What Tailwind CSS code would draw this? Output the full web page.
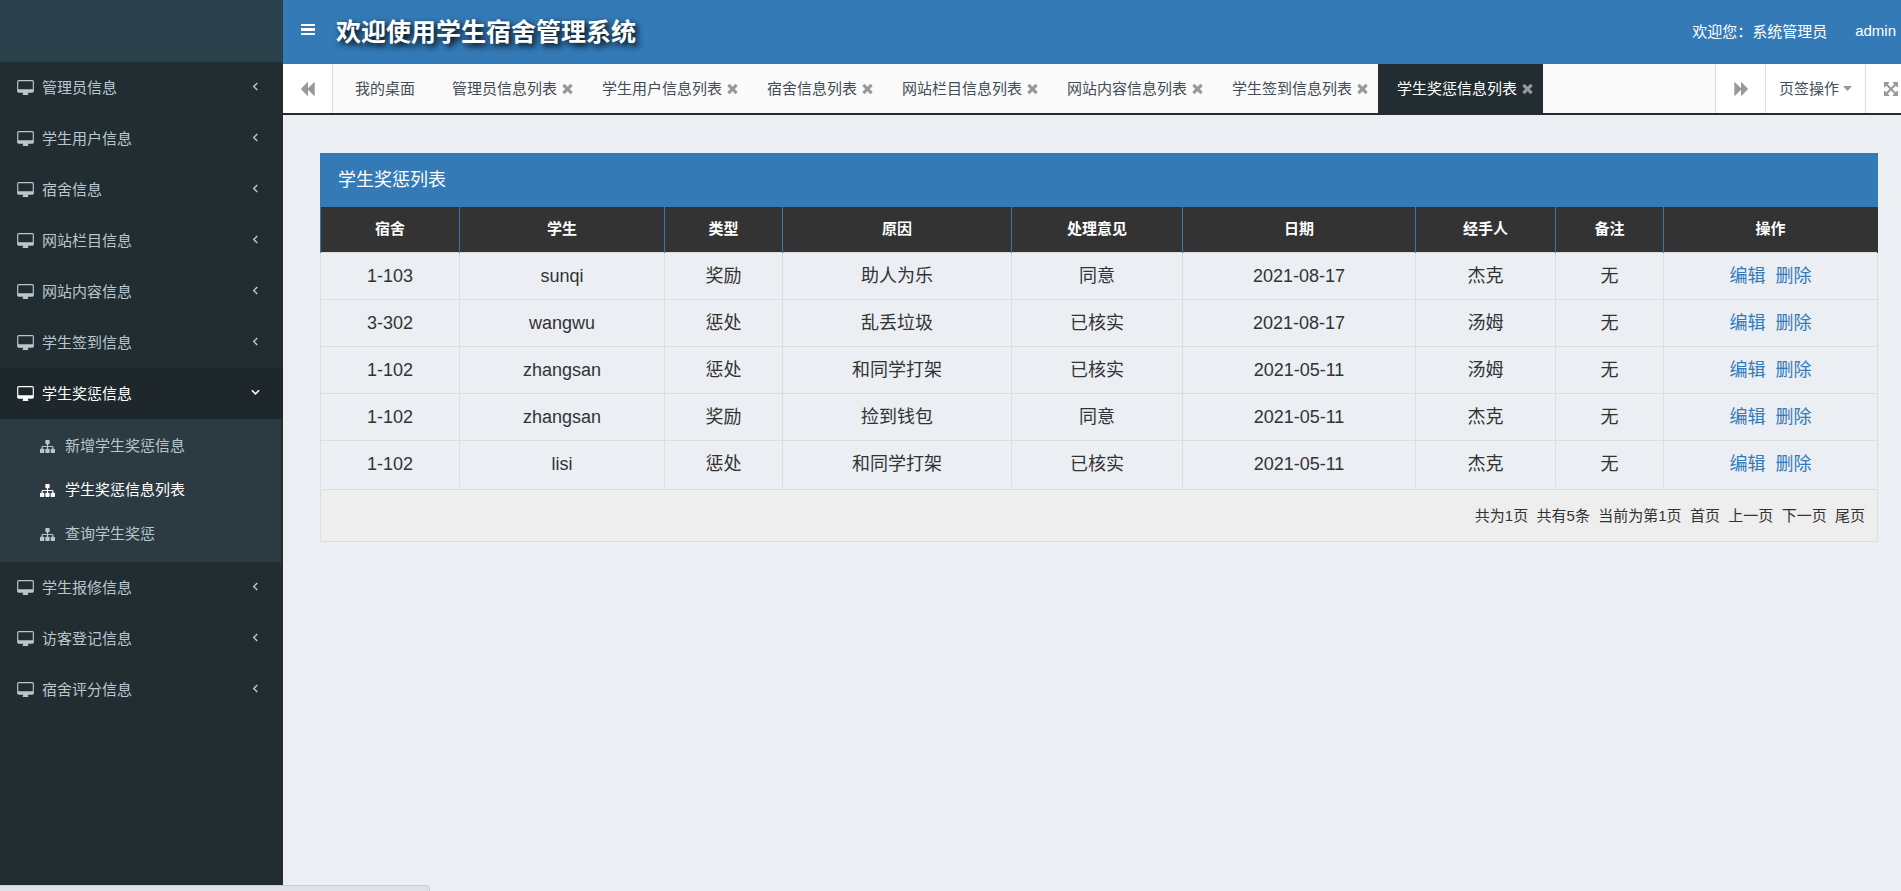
<!DOCTYPE html>
<html lang="zh-CN">
<head>
    <meta charset="UTF-8" />
    <meta name="viewport" content="width=device-width, initial-scale=1.0"/>
    <title>学生宿舍管理系统</title>
    <script src="https://cdn.jsdelivr.net/npm/@tailwindcss/browser@4"></script>
</head>
<body class="h-screen flex overflow-hidden bg-[#ebeef3] font-['Liberation_Sans','Noto_Sans_CJK_SC',sans-serif] text-[15px] leading-5 text-[#333]">

<!-- 图标 -->
<svg class="hidden">
    <symbol id="desktop" viewBox="0 0 1856 1664"><path d="M1728 992v-832q0-13-9.5-22.5t-22.5-9.5h-1536q-13 0-22.5 9.5t-9.5 22.5v832q0 13 9.5 22.5t22.5 9.5h1536q13 0 22.5-9.5t9.5-22.5zm128-832v1088q0 66-47 113t-113 47h-512q0 37 16 77.5t32 71 16 43.5q0 26-19 45t-45 19h-512q-26 0-45-19t-19-45q0-14 16-44t32-70 16-78h-512q-66 0-113-47t-47-113v-1088q0-66 47-113t113-47h1536q66 0 113 47t47 113z"/></symbol>
    <symbol id="sitemap" viewBox="0 128 1792 1536"><path d="M1792 1248v320q0 40-28 68t-68 28h-320q-40 0-68-28t-28-68v-320q0-40 28-68t68-28h96v-192h-512v192h96q40 0 68 28t28 68v320q0 40-28 68t-68 28h-320q-40 0-68-28t-28-68v-320q0-40 28-68t68-28h96v-192h-512v192h96q40 0 68 28t28 68v320q0 40-28 68t-68 28h-320q-40 0-68-28t-28-68v-320q0-40 28-68t68-28h96v-192q0-52 38-90t90-38h512v-192h-96q-40 0-68-28t-28-68v-320q0-40 28-68t68-28h320q40 0 68 28t28 68v320q0 40-28 68t-68 28h-96v192h512q52 0 90 38t38 90v192h96q40 0 68 28t28 68z"/></symbol>
    <symbol id="times" viewBox="302 366 1188 1188"><path d="M1490 1322q0 40-28 68l-136 136q-28 28-68 28t-68-28l-294-294-294 294q-28 28-68 28t-68-28l-136-136q-28-28-28-68t28-68l294-294-294-294q-28-28-28-68t28-68l136-136q28-28 68-28t68 28l294 294 294-294q28-28 68-28t68 28l136 136q28 28 28 68t-28 68l-294 294 294 294q28 28 28 68z"/></symbol>
    <symbol id="left" viewBox="0 0 6 10"><path d="M5 1L1 5l4 4" fill="none" stroke="currentColor" stroke-width="1.6"/></symbol>
    <symbol id="down" viewBox="0 0 10 6"><path d="M1 1l4 4 4-4" fill="none" stroke="currentColor" stroke-width="1.8"/></symbol>
    <symbol id="backward" viewBox="0 0 14 14"><path d="M7 .5v5.700L13 .3q.7-.5.7.4v12.600q0 .9-.7.400L7 7.800v5.700q0 .700-.600.200L.3 7.400q-.4-.400 0-.800L6.400.3Q7-.2 7 .5z"/></symbol>
    <symbol id="arrows" viewBox="128 128 1536 1536"><path d="M1411 541l-355 355 355 355 144-144q29-31 70-14 39 17 39 59v448q0 26-19 45t-45 19h-448q-42 0-59-40-17-39 14-69l144-144-355-355-355 355 144 144q31 30 14 69-17 40-59 40h-448q-26 0-45-19t-19-45v-448q0-42 40-59 39-17 69 14l144 144 355-355-355-355-144 144q-19 19-45 19-12 0-24-5-40-17-40-59v-448q0-26 19-45t45-19h448q42 0 59 40 17 39-14 69l-144 144 355 355 355-355-144-144q-31-30-14-69 17-40 59-40h448q26 0 45 19t19 45v448q0 42-39 59-13 5-25 5-26 0-45-19z"/></symbol>
</svg>

<!-- 左侧菜单 -->
<aside class="w-[283px] shrink-0 bg-[#222d32] text-[#b8c7ce]">
    <div class="h-[62px] bg-[#2a404b]"></div>
    <nav>
        <a href="#" class="flex items-center h-[51px] pl-[17px] pr-6 hover:text-white"><svg class="w-[17px] h-[15px] mr-2 fill-current"><use href="#desktop"/></svg><span class="flex-1">管理员信息</span><svg class="w-[7px] h-[9px] mb-[3px]"><use href="#left"/></svg></a>
        <a href="#" class="flex items-center h-[51px] pl-[17px] pr-6 hover:text-white"><svg class="w-[17px] h-[15px] mr-2 fill-current"><use href="#desktop"/></svg><span class="flex-1">学生用户信息</span><svg class="w-[7px] h-[9px] mb-[3px]"><use href="#left"/></svg></a>
        <a href="#" class="flex items-center h-[51px] pl-[17px] pr-6 hover:text-white"><svg class="w-[17px] h-[15px] mr-2 fill-current"><use href="#desktop"/></svg><span class="flex-1">宿舍信息</span><svg class="w-[7px] h-[9px] mb-[3px]"><use href="#left"/></svg></a>
        <a href="#" class="flex items-center h-[51px] pl-[17px] pr-6 hover:text-white"><svg class="w-[17px] h-[15px] mr-2 fill-current"><use href="#desktop"/></svg><span class="flex-1">网站栏目信息</span><svg class="w-[7px] h-[9px] mb-[3px]"><use href="#left"/></svg></a>
        <a href="#" class="flex items-center h-[51px] pl-[17px] pr-6 hover:text-white"><svg class="w-[17px] h-[15px] mr-2 fill-current"><use href="#desktop"/></svg><span class="flex-1">网站内容信息</span><svg class="w-[7px] h-[9px] mb-[3px]"><use href="#left"/></svg></a>
        <a href="#" class="flex items-center h-[51px] pl-[17px] pr-6 hover:text-white"><svg class="w-[17px] h-[15px] mr-2 fill-current"><use href="#desktop"/></svg><span class="flex-1">学生签到信息</span><svg class="w-[7px] h-[9px] mb-[3px]"><use href="#left"/></svg></a>
        <a href="#" class="flex items-center h-[51px] pl-[17px] pr-[23px] bg-[#1e282c] text-white"><svg class="w-[17px] h-[15px] mr-2 fill-current"><use href="#desktop"/></svg><span class="flex-1">学生奖惩信息</span><svg class="w-[9px] h-[6px] mb-[3px]"><use href="#down"/></svg></a>
        <div class="mr-0.5 pt-[5px] pb-1.5 bg-[#2c3b41]">
            <a href="#" class="flex items-center h-11 pl-10 hover:text-white"><svg class="w-[15px] h-[13px] mr-[10px] fill-current"><use href="#sitemap"/></svg>新增学生奖惩信息</a>
            <a href="#" class="flex items-center h-11 pl-10 text-white"><svg class="w-[15px] h-[13px] mr-[10px] fill-current"><use href="#sitemap"/></svg>学生奖惩信息列表</a>
            <a href="#" class="flex items-center h-11 pl-10 hover:text-white"><svg class="w-[15px] h-[13px] mr-[10px] fill-current"><use href="#sitemap"/></svg>查询学生奖惩</a>
        </div>
        <a href="#" class="flex items-center h-[51px] pl-[17px] pr-6 hover:text-white"><svg class="w-[17px] h-[15px] mr-2 fill-current"><use href="#desktop"/></svg><span class="flex-1">学生报修信息</span><svg class="w-[7px] h-[9px] mb-[3px]"><use href="#left"/></svg></a>
        <a href="#" class="flex items-center h-[51px] pl-[17px] pr-6 hover:text-white"><svg class="w-[17px] h-[15px] mr-2 fill-current"><use href="#desktop"/></svg><span class="flex-1">访客登记信息</span><svg class="w-[7px] h-[9px] mb-[3px]"><use href="#left"/></svg></a>
        <a href="#" class="flex items-center h-[51px] pl-[17px] pr-6 hover:text-white"><svg class="w-[17px] h-[15px] mr-2 fill-current"><use href="#desktop"/></svg><span class="flex-1">宿舍评分信息</span><svg class="w-[7px] h-[9px] mb-[3px]"><use href="#left"/></svg></a>
    </nav>
</aside>

<div class="flex-1 min-w-0">
    <!-- 顶部 -->
    <header class="flex items-center h-16 pl-[18px] pr-[5px] bg-[#337ab7] text-white">
        <button type="button" aria-label="菜单" class="mr-[21px] pb-[5px]"><svg class="w-[14px] h-[11px] fill-current" viewBox="0 0 14 11"><path d="M0 0h14v2H0zM0 4h14v3H0zM0 9h14v2H0z"/></svg></button>
        <h1 class="flex-1 text-[25px] leading-8 font-bold [text-shadow:3px_3px_6px_#000]">欢迎使用学生宿舍管理系统</h1>
        <a href="#" class="mr-7">欢迎您：系统管理员</a>
        <a href="#" class="pb-0.5">admin</a>
    </header>

    <!-- 页签 -->
    <div class="flex h-[51px] bg-[#fafafa] border-b-2 border-[#222d32] text-[#444c55] whitespace-nowrap">
        <button type="button" aria-label="向左" class="w-[50px] flex items-center justify-center bg-white border-r border-[#ddd] text-[#999]"><svg class="w-[14px] h-[14px] fill-current"><use href="#backward"/></svg></button>
        <nav class="flex flex-1 min-w-0">
            <a href="#" class="flex items-center pl-[22px] pr-[18px]">我的桌面</a>
            <a href="#" class="flex items-center gap-[5px] pl-[19px] pr-[10px]">管理员信息列表<svg class="w-[11px] h-[10px] fill-[#999]"><use href="#times"/></svg></a>
            <a href="#" class="flex items-center gap-[5px] pl-[19px] pr-[10px]">学生用户信息列表<svg class="w-[11px] h-[10px] fill-[#999]"><use href="#times"/></svg></a>
            <a href="#" class="flex items-center gap-[5px] pl-[19px] pr-[10px]">宿舍信息列表<svg class="w-[11px] h-[10px] fill-[#999]"><use href="#times"/></svg></a>
            <a href="#" class="flex items-center gap-[5px] pl-[19px] pr-[10px]">网站栏目信息列表<svg class="w-[11px] h-[10px] fill-[#999]"><use href="#times"/></svg></a>
            <a href="#" class="flex items-center gap-[5px] pl-[19px] pr-[10px]">网站内容信息列表<svg class="w-[11px] h-[10px] fill-[#999]"><use href="#times"/></svg></a>
            <a href="#" class="flex items-center gap-[5px] pl-[19px] pr-[10px]">学生签到信息列表<svg class="w-[11px] h-[10px] fill-[#999]"><use href="#times"/></svg></a>
            <a href="#" class="flex items-center gap-[5px] pl-[19px] pr-[10px] bg-[#222d32] text-white">学生奖惩信息列表<svg class="w-[11px] h-[10px] fill-[#999]"><use href="#times"/></svg></a>
        </nav>
        <button type="button" aria-label="向右" class="w-[50px] flex items-center justify-center bg-white border-l border-[#ddd] text-[#999]"><svg class="w-[14px] h-[14px] fill-current rotate-180"><use href="#backward"/></svg></button>
        <button type="button" class="w-[100px] flex items-center justify-center gap-1 bg-white border-l border-[#ddd]">页签操作<svg class="w-[9px] h-[5px] fill-[#999]" viewBox="0 0 9 5"><path d="M0 0h9L4.500 5z"/></svg></button>
        <button type="button" aria-label="全屏" class="w-9 flex items-center pl-[18px] bg-white border-l border-[#ddd] text-[#999]"><svg class="w-[14px] h-[14px] fill-current"><use href="#arrows"/></svg></button>
    </div>

    <!-- 列表 -->
    <main class="pt-[38px] pl-[37px] pr-[23px]">
        <h2 class="h-[54px] pl-[18px] flex items-center bg-[#337ab7] text-white text-lg">学生奖惩列表</h2>
        <table class="w-full table-fixed border-collapse text-center text-lg leading-6">
            <colgroup>
                <col class="w-[139px]"><col class="w-[205px]"><col class="w-[118px]"><col class="w-[229px]"><col class="w-[171px]"><col class="w-[233px]"><col class="w-[140px]"><col class="w-[108px]"><col class="w-[214px]">
            </colgroup>
            <thead class="bg-[#333] text-white text-[15px]">
                <tr class="h-[45px] *:border-x *:border-[#337ab7] *:last:border-r-[#333]">
                    <th>宿舍</th><th>学生</th><th>类型</th><th>原因</th><th>处理意见</th><th>日期</th><th>经手人</th><th>备注</th><th>操作</th>
                </tr>
            </thead>
            <tbody>
                <tr class="h-[47px] *:border *:border-[#ddd]">
                    <td>1-103</td><td>sunqi</td><td>奖励</td><td>助人为乐</td><td>同意</td><td>2021-08-17</td><td>杰克</td><td>无</td>
                    <td class="text-[#337ab7]"><a href="#">编辑</a>&nbsp; <a href="#">删除</a></td>
                </tr>
                <tr class="h-[47px] *:border *:border-[#ddd]">
                    <td>3-302</td><td>wangwu</td><td>惩处</td><td>乱丢垃圾</td><td>已核实</td><td>2021-08-17</td><td>汤姆</td><td>无</td>
                    <td class="text-[#337ab7]"><a href="#">编辑</a>&nbsp; <a href="#">删除</a></td>
                </tr>
                <tr class="h-[47px] *:border *:border-[#ddd]">
                    <td>1-102</td><td>zhangsan</td><td>惩处</td><td>和同学打架</td><td>已核实</td><td>2021-05-11</td><td>汤姆</td><td>无</td>
                    <td class="text-[#337ab7]"><a href="#">编辑</a>&nbsp; <a href="#">删除</a></td>
                </tr>
                <tr class="h-[47px] *:border *:border-[#ddd]">
                    <td>1-102</td><td>zhangsan</td><td>奖励</td><td>捡到钱包</td><td>同意</td><td>2021-05-11</td><td>杰克</td><td>无</td>
                    <td class="text-[#337ab7]"><a href="#">编辑</a>&nbsp; <a href="#">删除</a></td>
                </tr>
                <tr class="h-[47px] *:border *:border-b-0 *:border-[#ddd]">
                    <td>1-102</td><td>lisi</td><td>惩处</td><td>和同学打架</td><td>已核实</td><td>2021-05-11</td><td>杰克</td><td>无</td>
                    <td class="text-[#337ab7]"><a href="#">编辑</a>&nbsp; <a href="#">删除</a></td>
                </tr>
            </tbody>
        </table>
        <div class="mt-0.5 h-[53px] pr-3 flex items-center justify-end bg-[#eee] border border-[#ddd]">
            <p>共为1页&nbsp; 共有5条&nbsp; 当前为第1页&nbsp; <a href="#">首页</a>&nbsp; <a href="#">上一页</a>&nbsp; <a href="#">下一页</a>&nbsp; <a href="#">尾页</a></p>
        </div>
    </main>
</div>

<!-- 状态栏 -->
<div class="fixed left-0 bottom-0 w-[430px] h-1.5 bg-[#dee1e6] border-t border-r border-[#cbced3] rounded-tr"></div>
</body>
</html>
